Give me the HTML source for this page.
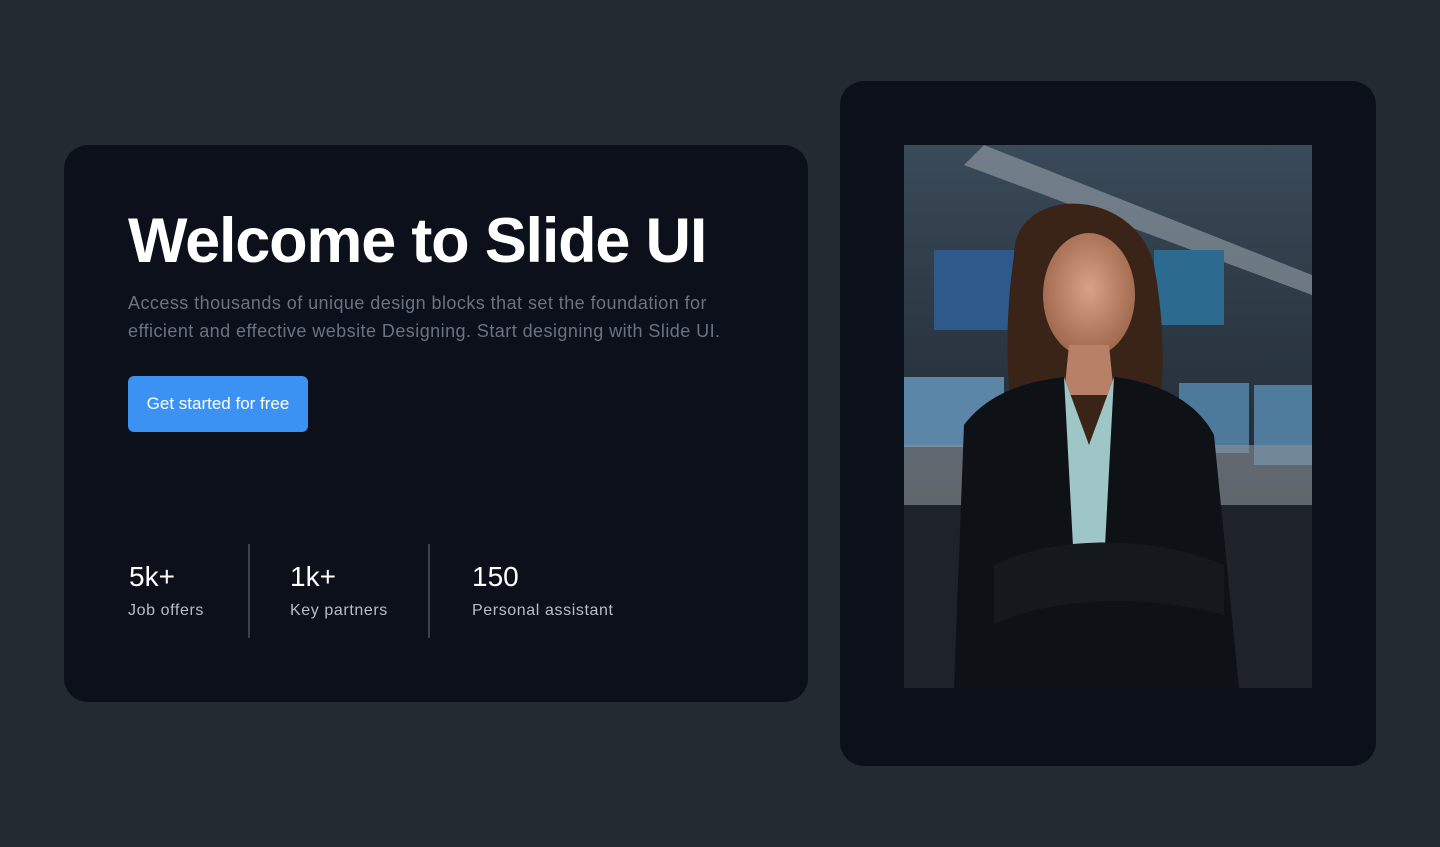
<!DOCTYPE html>
<html><head><style>
*{margin:0;padding:0;box-sizing:border-box}
body{width:1440px;height:847px;background:#232a32;font-family:"Liberation Sans",sans-serif;position:relative;overflow:hidden}
.card{position:absolute;left:64px;top:145px;width:744px;height:557px;background:#0b101a;border-radius:24px}
h1{position:absolute;left:128px;top:205px;font-size:63px;font-weight:bold;color:#fff;letter-spacing:-1.2px;white-space:nowrap}
.sub{position:absolute;left:128px;top:289px;font-size:18px;line-height:28px;color:#6b7280;width:620px;letter-spacing:0.45px;white-space:nowrap}
.btn{position:absolute;left:128px;top:376px;width:180px;height:56px;background:#3c92f3;border-radius:6px;color:#fff;font-size:17px;line-height:56px;text-align:center}
.num{position:absolute;top:561px;font-size:28px;color:#fff;font-weight:500}
.lab{position:absolute;top:602px;font-size:16px;color:#b8bec8;letter-spacing:0.6px}
.div{position:absolute;top:544px;width:2px;height:94px;background:#3a414b}
.pcard{position:absolute;left:840px;top:81px;width:536px;height:685px;background:#0b101a;border-radius:24px}
.photo{position:absolute;left:904px;top:145px;width:408px;height:543px;overflow:hidden}
</style></head><body>
<div class="card"></div>
<h1>Welcome to Slide UI</h1>
<div class="sub">Access thousands of unique design blocks that set the foundation for<br>efficient and effective website Designing. Start designing with Slide UI.</div>
<div class="btn">Get started for free</div>
<div class="num" style="left:129px">5k+</div><div class="lab" style="left:128px">Job offers</div>
<div class="div" style="left:248px"></div>
<div class="num" style="left:290px">1k+</div><div class="lab" style="left:290px">Key partners</div>
<div class="div" style="left:428px"></div>
<div class="num" style="left:472px">150</div><div class="lab" style="left:472px">Personal assistant</div>
<div class="pcard"></div>
<div class="photo">
<svg width="408" height="543" viewBox="0 0 408 543">
<defs>
<linearGradient id="bg" x1="0" y1="0" x2="0" y2="1"><stop offset="0" stop-color="#3a4a58"/><stop offset="0.4" stop-color="#2a3540"/><stop offset="1" stop-color="#161c22"/></linearGradient>
<radialGradient id="face" cx="0.5" cy="0.45" r="0.6"><stop offset="0" stop-color="#d9a285"/><stop offset="1" stop-color="#9a6248"/></radialGradient>
</defs>
<rect width="408" height="543" fill="url(#bg)"/>
<path d="M80 0 L408 130 L408 150 L60 20Z" fill="#a9b4bc" opacity="0.5"/>
<rect x="30" y="105" width="100" height="80" fill="#2d5a8a"/>
<rect x="250" y="105" width="70" height="75" fill="#2d6a90"/>
<rect x="0" y="232" width="100" height="70" fill="#5b86a8"/>
<rect x="275" y="238" width="70" height="70" fill="#4d7a9a"/>
<rect x="350" y="240" width="58" height="80" fill="#4f7c9c"/>
<rect x="0" y="300" width="408" height="60" fill="#8a8f94" opacity="0.6"/>
<rect x="0" y="360" width="408" height="183" fill="#1d2328"/>
<path d="M110 110 C110 40 230 40 250 120 C265 200 260 280 240 320 L120 320 C100 260 100 180 110 110Z" fill="#3a2418"/>
<ellipse cx="185" cy="150" rx="46" ry="62" fill="url(#face)"/>
<path d="M165 200 L205 200 L210 250 L160 250Z" fill="#b88067"/>
<path d="M60 280 C90 240 140 235 160 232 L185 300 L210 232 C240 235 290 250 310 290 L335 543 L50 543Z" fill="#0e1115"/>
<path d="M160 232 L185 300 L210 232 L200 420 L170 420Z" fill="#9fc6c7"/>
<path d="M90 420 C150 390 250 390 320 420 L320 470 C250 450 150 450 90 480Z" fill="#15191e"/>
</svg>
</div>
</body></html>
